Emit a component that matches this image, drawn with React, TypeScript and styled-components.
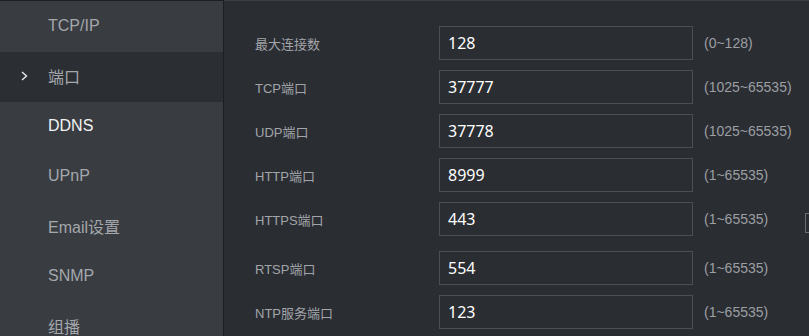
import React from 'react';
import styled, { createGlobalStyle } from 'styled-components';

const GlobalStyle = createGlobalStyle`
  html, body {
    margin: 0;
    padding: 0;
    background: #2a2d32;
  }
  body {
    font-family: "Liberation Sans", "Noto Sans CJK SC", sans-serif;
  }
`;

const Page = styled.div`
  display: flex;
  width: 809px;
  height: 336px;
  overflow: hidden;
  background: #2a2d32;
`;

const Sidebar = styled.nav`
  flex: 0 0 223px;
  display: flex;
  flex-direction: column;
  padding-top: 1px;
  background: #393c41;
  border-top: 1px solid #1d1f23;
  border-right: 1px solid #1d1f23;
`;

const NavItem = styled.div<{ $active?: boolean; $bright?: boolean }>`
  position: relative;
  box-sizing: border-box;
  flex: 0 0 50px;
  display: flex;
  align-items: center;
  padding: 0 0 3px 48px;
  font-size: 16px;
  color: ${p => (p.$bright ? '#f2f3f5' : '#a4a7ac')};
  background: ${p => (p.$active ? '#2b2e33' : 'transparent')};
`;

const Chevron = styled.svg`
  position: absolute;
  left: 21px;
  top: 50%;
  margin-top: -6px;
`;

const Main = styled.main`
  flex: 1;
  min-width: 0;
  border-top: 1px solid #3b3e43;
  padding: 25px 0 0 31px;
  display: flex;
  flex-direction: column;
  gap: 10px;
`;

const Row = styled.div<{ $spaced?: boolean }>`
  display: flex;
  align-items: center;
  height: 34px;
  margin-top: ${p => (p.$spaced ? '5px' : '0')};
`;

const Label = styled.label`
  flex: 0 0 184px;
  font-size: 13px;
  color: #a2a5aa;
`;

const Input = styled.input`
  box-sizing: border-box;
  flex: 0 0 254px;
  height: 34px;
  padding: 0 8px;
  border: 1px solid #4b4e54;
  background: #2a2d32;
  color: #ffffff;
  font-family: "Noto Sans", "DejaVu Sans", sans-serif;
  font-size: 16px;
  outline: none;
`;

const Range = styled.span`
  flex: 0 0 101px;
  margin-left: 11px;
  font-size: 14px;
  color: #9c9fa4;
`;

const Check = styled.span`
  flex: 0 0 16px;
  box-sizing: border-box;
  height: 20px;
  margin-top: 8px;
  border: 1px solid #6a6d72;
`;

const navItems = ['TCP/IP', '端口', 'DDNS', 'UPnP', 'Email设置', 'SNMP', '组播'];

const fields = [
  { label: '最大连接数', value: '128', range: '(0~128)' },
  { label: 'TCP端口', value: '37777', range: '(1025~65535)' },
  { label: 'UDP端口', value: '37778', range: '(1025~65535)' },
  { label: 'HTTP端口', value: '8999', range: '(1~65535)' },
  { label: 'HTTPS端口', value: '443', range: '(1~65535)', check: true },
  { label: 'RTSP端口', value: '554', range: '(1~65535)', spaced: true },
  { label: 'NTP服务端口', value: '123', range: '(1~65535)' },
];

function App() {
  return (
    <Page>
      <GlobalStyle />
      <Sidebar>
        {navItems.map(name => (
          <NavItem key={name} $active={name === '端口'} $bright={name === 'DDNS'}>
            {name === '端口' && (
              <Chevron width="7" height="10" viewBox="0 0 7 10">
                <path d="M1 1 L5.5 5 L1 9" fill="none" stroke="#e8e9eb" strokeWidth="1.4" />
              </Chevron>
            )}
            {name}
          </NavItem>
        ))}
      </Sidebar>
      <Main>
        {fields.map(f => (
          <Row key={f.label} $spaced={f.spaced}>
            <Label>{f.label}</Label>
            <Input defaultValue={f.value} />
            <Range>{f.range}</Range>
            {f.check && <Check />}
          </Row>
        ))}
      </Main>
    </Page>
  );
}

export default App;
